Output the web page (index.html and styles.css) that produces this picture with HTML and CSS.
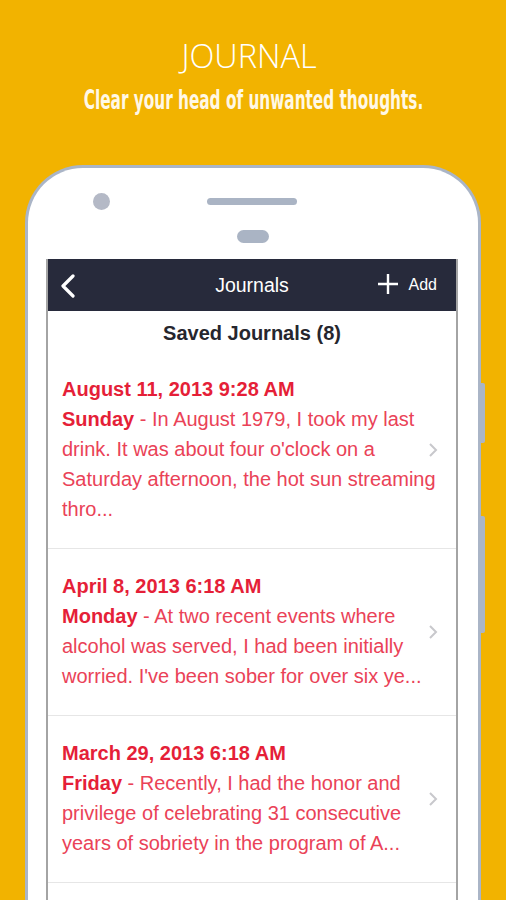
FILE: index.html
```html
<!DOCTYPE html>
<html lang="en">
<head>
  <meta charset="UTF-8" />
  <meta name="viewport" content="width=device-width, initial-scale=1.0"/>
  <title>Journal</title>
  <link rel="stylesheet" href="styles.css">
</head>
<body>

  <div class="intro">
    <h1 class="intro-title">JOURNAL</h1>
    <p class="intro-sub"><span>Clear your head of unwanted thoughts.</span></p>
  </div>

  <div class="phone">
    <span class="side-btn side-btn-top"></span>
    <span class="side-btn side-btn-bottom"></span>

    <div class="phone-top">
      <div class="sensor-row">
        <span class="camera"></span>
        <span class="speaker"></span>
      </div>
      <span class="pill"></span>
    </div>

    <div class="screen">
      <div class="navbar">
        <div class="nav-left">
          <svg width="16" height="24" viewBox="0 0 16 24">
            <polyline points="13,2 3,12 13,22" fill="none" stroke="#fff" stroke-width="3.2" stroke-linecap="round" stroke-linejoin="round"/>
          </svg>
        </div>
        <div class="nav-title">Journals</div>
        <div class="nav-right">
          <svg width="22" height="22" viewBox="0 0 22 22">
            <path d="M11 1 V21 M1 11 H21" stroke="#fff" stroke-width="2.4" fill="none"/>
          </svg>
          <span>Add</span>
        </div>
      </div>

      <div class="saved-head">Saved Journals (8)</div>

      <ul class="entries">
        <li class="entry">
          <div class="entry-date">August 11, 2013 9:28 AM</div>
          <p class="entry-text"><b>Sunday</b> - In August 1979, I took my last drink. It was about four o'clock on a Saturday afternoon, the hot sun streaming thro...</p>
          <svg class="entry-arrow" width="10" height="16" viewBox="0 0 10 16"><polyline points="2,2 8,8 2,14" fill="none" stroke="#c8c8cc" stroke-width="2"/></svg>
        </li>
        <li class="entry">
          <div class="entry-date">April 8, 2013 6:18 AM</div>
          <p class="entry-text"><b>Monday</b> - At two recent events where alcohol was served, I had been initially worried. I've been sober for over six ye...</p>
          <svg class="entry-arrow" width="10" height="16" viewBox="0 0 10 16"><polyline points="2,2 8,8 2,14" fill="none" stroke="#c8c8cc" stroke-width="2"/></svg>
        </li>
        <li class="entry">
          <div class="entry-date">March 29, 2013 6:18 AM</div>
          <p class="entry-text"><b>Friday</b> - Recently, I had the honor and privilege of celebrating 31 consecutive years of sobriety in the program of A...</p>
          <svg class="entry-arrow" width="10" height="16" viewBox="0 0 10 16"><polyline points="2,2 8,8 2,14" fill="none" stroke="#c8c8cc" stroke-width="2"/></svg>
        </li>
      </ul>
    </div>
  </div>

</body>
</html>
```

FILE: styles.css
```css
body {
  margin: 0;
  width: 506px;
  height: 900px;
  overflow: hidden;
  background: #f2b300;
  font-family: "Liberation Sans", Arial, sans-serif;
}
.intro {
  text-align: center;
  padding-top: 36px;
  color: #fff;
  overflow: hidden;
}
.intro-title {
  margin: 0;
  padding-right: 8px;
  font-family: "Open Sans", sans-serif;
  font-weight: 300;
  font-size: 32.5px;
  line-height: 40px;
}
.intro-sub {
  display: flex;
  justify-content: center;
  margin: 9px 0 0;
  height: 30px;
  line-height: 30px;
  font-family: "DejaVu Sans", sans-serif;
  font-stretch: condensed;
  font-weight: bold;
  font-size: 27px;
  color: #fff8e6;
}
.intro-sub span {
  flex: none;
  transform: scaleX(0.63);
  white-space: nowrap;
}
.phone {
  position: relative;
  margin: 50px 0 0 25px;
  width: 456px;
  height: 760px;
  box-sizing: border-box;
  border: 3px solid #aab5c7;
  border-bottom: none;
  border-radius: 58px 58px 0 0;
  background: #fff;
}
.side-btn {
  position: absolute;
  right: -7px;
  width: 5px;
  background: #aab5c7;
  border-radius: 0 2px 2px 0;
}
.side-btn-top {
  top: 215px;
  height: 60px;
}
.side-btn-bottom {
  top: 348px;
  height: 117px;
}
.phone-top {
  height: 91px;
  display: flex;
  flex-direction: column;
}
.sensor-row {
  display: flex;
  align-items: center;
  margin-top: 25px;
  padding-left: 65px;
}
.camera {
  width: 17px;
  height: 17px;
  border-radius: 50%;
  background: #b4b9c6;
}
.speaker {
  margin-left: 97px;
  width: 90px;
  height: 7px;
  border-radius: 4px;
  background: #aab4c4;
}
.pill {
  align-self: center;
  margin-top: 20px;
  width: 32px;
  height: 13px;
  border-radius: 7px;
  background: #aab4c4;
}
.screen {
  margin-left: 18px;
  width: 412px;
  height: 700px;
  box-sizing: border-box;
  border-left: 2px solid #a4a4a4;
  border-right: 2px solid #a4a4a4;
}
.navbar {
  height: 52px;
  background: #272a3b;
  color: #fff;
  display: grid;
  grid-template-columns: 1fr auto 1fr;
  align-items: center;
}
.nav-left {
  padding-left: 12px;
  display: flex;
  padding-top: 2px;
}
.nav-title {
  font-size: 19.5px;
}
.nav-right {
  display: flex;
  align-items: center;
  justify-content: flex-end;
  gap: 10px;
  padding-right: 19px;
  font-size: 16px;
}
.nav-right svg {
  margin-top: -2px;
}
.saved-head {
  padding: 7px 0 4px;
  text-align: center;
  font-size: 20px;
  line-height: 30px;
  font-weight: bold;
  color: #26262e;
}
.entries {
  list-style: none;
  margin: 0;
  padding: 0;
}
.entry {
  position: relative;
  padding: 22px 0 24px 14px;
  border-bottom: 1px solid #e6e6e6;
  font-size: 20px;
  line-height: 30px;
}
.entry-date {
  font-weight: bold;
  color: #e51f38;
}
.entry-text {
  margin: 0;
  width: 382px;
  color: #ea4257;
}
.entry-text b {
  color: #e51f38;
}
.entry-arrow {
  position: absolute;
  right: 18px;
  top: 50%;
  margin-top: -8px;
}
```
